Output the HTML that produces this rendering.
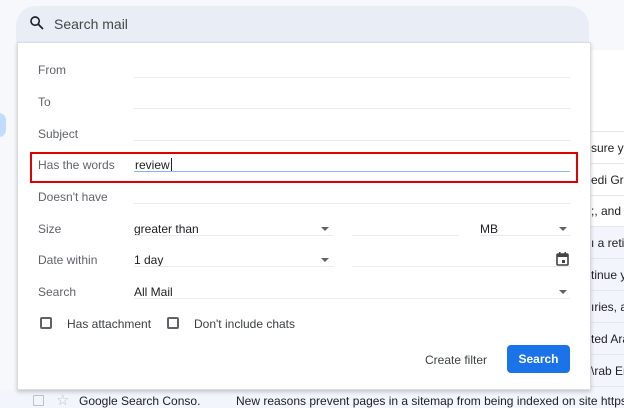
<!DOCTYPE html>
<html><head><style>
*{margin:0;padding:0;box-sizing:border-box}
html,body{width:624px;height:408px;overflow:hidden}
body{background:#f6f8fc;font-family:"Liberation Sans",Arial,sans-serif;font-size:12px;color:#202124;position:relative}
#w{position:absolute;left:0;top:0;width:624px;height:408px;overflow:hidden}
.abs{position:absolute}
.row{position:absolute;left:591px;width:33px;height:32px;border-bottom:1px solid #e4e6ea;white-space:nowrap;overflow:hidden;font-size:12px;line-height:32px;color:#202124}
.lbl{position:absolute;left:38px;color:#5f6368;font-size:12px}
.ln{position:absolute;height:1px;background:#e8eaed}
.arr{position:absolute;width:0;height:0;border-left:4px solid transparent;border-right:4px solid transparent;border-top:4px solid #5f6368}
.val{position:absolute;font-size:12px;color:#202124}
.cb{position:absolute;width:12px;height:12px;border:2px solid #5f6368;border-radius:2px}
</style></head><body><div id="w">
<div class="abs" style="left:591px;top:50px;width:33px;height:358px;background:#fff"></div>
<div class="abs" style="left:591px;top:227px;width:33px;height:181px;background:#f2f6fc"></div>
<div class="abs" style="left:591px;top:131px;width:33px;height:1px;background:#e4e6ea"></div>
<div class="row" style="top:132px"><span>sure yo</span></div>
<div class="row" style="top:164px"><span>edi Gre</span></div>
<div class="row" style="top:195px"><span>;, and th</span></div>
<div class="row" style="top:227px"><span>ı a retire</span></div>
<div class="row" style="top:259px"><span>tinue y</span></div>
<div class="row" style="top:291px"><span>ıries, ar</span></div>
<div class="row" style="top:323px"><span>ted Ara</span></div>
<div class="row" style="top:355px"><span>\rab Em</span></div>
<div class="abs" style="left:-8px;top:113px;width:14px;height:24px;border-radius:12px;background:#c2dbff"></div>
<div class="abs" style="left:0;top:389px;width:624px;height:19px;background:#f2f6fc"></div>
<div class="abs" style="left:33px;top:395px;width:11px;height:11px;border:1px solid #bdc1c6;border-radius:1px"></div>
<div class="abs" style="left:56px;top:391px;color:#bdc1c6;font-size:15px">☆</div>
<div class="abs" style="left:79px;top:394px;font-size:12px">Google Search Conso.</div>
<div class="abs" style="left:236px;top:394px;width:388px;overflow:hidden;font-size:12px;white-space:nowrap">New reasons prevent pages in a sitemap from being indexed on site https://ye</div>
<div class="abs" style="left:16px;top:6px;width:573px;height:37px;border-radius:20px 20px 0 0;background:#e9eef6"></div>
<svg class="abs" style="left:28px;top:14px" width="18" height="18" viewBox="0 0 24 24"><circle cx="9.5" cy="9.5" r="5.5" fill="none" stroke="#202124" stroke-width="2.2"/><path d="M13.5 13.5L20 20" stroke="#202124" stroke-width="2.4"/></svg>
<div class="abs" style="left:54px;top:16px;font-size:14px;color:#444746">Search mail</div>
<div class="abs" style="left:17px;top:42px;width:574px;height:348px;background:#fff;border:1px solid #dadce0;box-shadow:0 2px 4px rgba(0,0,0,.2)"></div>
<div class="lbl" style="top:63px">From</div><div class="ln" style="left:134px;top:77px;width:436px"></div>
<div class="lbl" style="top:95px">To</div><div class="ln" style="left:134px;top:108px;width:436px"></div>
<div class="lbl" style="top:127px">Subject</div><div class="ln" style="left:134px;top:140px;width:436px"></div>
<div class="lbl" style="top:158px">Has the words</div>
<div class="val" style="left:135px;top:158px">review<span style="border-left:1px solid #202124;margin-left:1px"></span></div>
<div class="abs" style="left:134px;top:171px;width:436px;height:1px;background:#8ab4f8"></div>
<div class="abs" style="left:30px;top:152px;width:548px;height:31px;border:2px solid #e00000"></div>
<div class="lbl" style="top:190px">Doesn't have</div><div class="ln" style="left:134px;top:203px;width:436px"></div>
<div class="lbl" style="top:222px">Size</div>
<div class="val" style="left:134px;top:222px">greater than</div><div class="arr" style="left:321px;top:227px"></div>
<div class="ln" style="left:134px;top:235px;width:199px"></div>
<div class="ln" style="left:352px;top:235px;width:107px"></div>
<div class="val" style="left:480px;top:222px">MB</div><div class="arr" style="left:559px;top:227px"></div>
<div class="ln" style="left:480px;top:235px;width:90px"></div>
<div class="lbl" style="top:253px">Date within</div>
<div class="val" style="left:134px;top:253px">1 day</div><div class="arr" style="left:321px;top:258px"></div>
<div class="ln" style="left:134px;top:266px;width:199px"></div>
<div class="ln" style="left:352px;top:266px;width:218px"></div>
<svg class="abs" style="left:556px;top:252px" width="13" height="14" viewBox="0 0 13 14"><rect x="1" y="2" width="11" height="11" rx="1" fill="none" stroke="#444" stroke-width="1.6"/><rect x="1" y="2" width="11" height="3" fill="#444"/><rect x="3" y="0" width="1.5" height="3" fill="#444"/><rect x="8.5" y="0" width="1.5" height="3" fill="#444"/><rect x="6" y="8" width="3" height="3" fill="#444"/></svg>
<div class="lbl" style="top:285px">Search</div>
<div class="val" style="left:134px;top:285px">All Mail</div><div class="arr" style="left:559px;top:290px"></div>
<div class="ln" style="left:134px;top:298px;width:436px"></div>
<div class="cb" style="left:40px;top:317px"></div>
<div class="val" style="left:67px;top:317px;color:#3c4043">Has attachment</div>
<div class="cb" style="left:167px;top:317px"></div>
<div class="val" style="left:194px;top:317px;color:#3c4043">Don't include chats</div>
<div class="val" style="left:425px;top:353px;color:#3c4043">Create filter</div>
<div class="abs" style="left:507px;top:345px;width:63px;height:28px;border-radius:4px;background:#1a73e8;color:#fff;font-size:12px;font-weight:bold;text-align:center;line-height:28px">Search</div>
</div></body></html>
